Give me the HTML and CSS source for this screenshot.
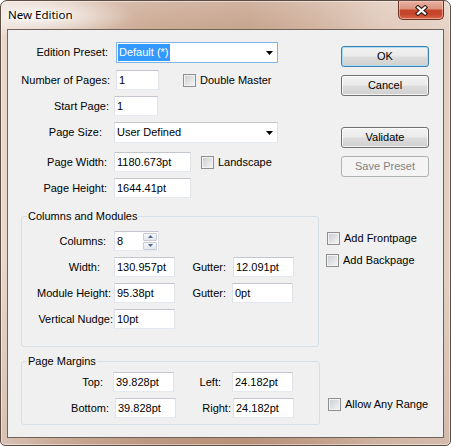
FILE: index.html
```html
<!DOCTYPE html>
<html>
<head>
<meta charset="utf-8">
<title>New Edition</title>
<link rel="stylesheet" href="styles.css">
</head>
<body>
<div class="window">
  <div class="titlebar">
    <span class="title">New Edition</span>
    <div class="close">
      <svg width="13" height="11" viewBox="0 0 13 11">
        <path d="M3 2.5 L10 8.5 M10 2.5 L3 8.5" stroke="#3b2019" stroke-width="4.4" stroke-linecap="square" fill="none"/>
        <path d="M3 2.5 L10 8.5 M10 2.5 L3 8.5" stroke="#ffffff" stroke-width="2.2" stroke-linecap="square" fill="none"/>
      </svg>
    </div>
  </div>

  <div class="client">
    <div class="left">
      <div class="form">
        <div class="row h21">
          <span class="lbl lw-100">Edition Preset:</span>
          <div class="combo focus w162 ml-8"><span class="sel">Default (*)</span><svg class="arrow" width="7" height="4" viewBox="0 0 7 4"><path d="M0 0H7L3.5 4Z" fill="#000"/></svg></div>
        </div>
        <div class="row mt-1">
          <span class="lbl lw-102">Number of Pages:</span>
          <div class="tb w43 ml-6">1</div>
          <div class="check ml-24"><span class="cb"></span><span>Double Master</span></div>
        </div>
        <div class="row">
          <span class="lbl lw-101">Start Page:</span>
          <div class="tb w44 ml-5">1</div>
        </div>
        <div class="row h21">
          <span class="lbl lw-94">Page Size:</span>
          <div class="combo w164 ml-12"><span class="val">User Defined</span><svg class="arrow" width="7" height="4" viewBox="0 0 7 4"><path d="M0 0H7L3.5 4Z" fill="#000"/></svg></div>
        </div>
        <div class="row mt-3">
          <span class="lbl lw-99">Page Width:</span>
          <div class="tb w77 ml-7">1180.673pt</div>
          <div class="check ml-10"><span class="cb"></span><span>Landscape</span></div>
        </div>
        <div class="row">
          <span class="lbl lw-99">Page Height:</span>
          <div class="tb w77 ml-7">1644.41pt</div>
        </div>
      </div>

      <div class="group cols">
        <span class="group-title">Columns and Modules</span>
        <div class="group-body pt-14">
          <div class="row">
            <span class="lbl lw-84">Columns:</span>
            <div class="tb spin ml-8">
              <span>8</span>
              <span class="spin-btns">
                <span class="spin-btn"><svg width="5" height="3" viewBox="0 0 5 3"><path d="M0 3H5L2.5 0Z" fill="#4a6797"/></svg></span>
                <span class="spin-btn"><svg width="5" height="3" viewBox="0 0 5 3"><path d="M0 0H5L2.5 3Z" fill="#4a6797"/></svg></span>
              </span>
            </div>
          </div>
          <div class="row">
            <span class="lbl lw-78">Width:</span>
            <div class="tb w61 ml-14">130.957pt</div>
            <span class="lbl lw-51">Gutter:</span>
            <div class="tb w61 ml-7">12.091pt</div>
          </div>
          <div class="row">
            <span class="lbl lw-89">Module Height:</span>
            <div class="tb w61 ml-3">95.38pt</div>
            <span class="lbl lw-51">Gutter:</span>
            <div class="tb w61 ml-6">0pt</div>
          </div>
          <div class="row">
            <span class="lbl lw-91">Vertical Nudge:</span>
            <div class="tb w61 ml-1">10pt</div>
          </div>
        </div>
      </div>

      <div class="group margins">
        <span class="group-title">Page Margins</span>
        <div class="group-body pt-10">
          <div class="row">
            <span class="lbl lw-81">Top:</span>
            <div class="tb w61 ml-10">39.828pt</div>
            <span class="lbl lw-47">Left:</span>
            <div class="tb w61 ml-11">24.182pt</div>
          </div>
          <div class="row">
            <span class="lbl lw-87">Bottom:</span>
            <div class="tb w61 ml-6">39.828pt</div>
            <span class="lbl lw-55">Right:</span>
            <div class="tb w61 ml-2">24.182pt</div>
          </div>
        </div>
      </div>
    </div>

    <div class="right">
      <div class="btn default first">OK</div>
      <div class="btn near">Cancel</div>
      <div class="btn far">Validate</div>
      <div class="btn near disabled">Save Preset</div>
      <div class="check front"><span class="cb"></span><span>Add Frontpage</span></div>
      <div class="check back"><span class="cb"></span><span>Add Backpage</span></div>
      <div class="check range"><span class="cb"></span><span>Allow Any Range</span></div>
    </div>
  </div>
</div>
</body>
</html>
```

FILE: styles.css
```css
* { box-sizing: border-box; }

html, body {
  margin: 0;
  padding: 0;
}

body {
  width: 451px;
  height: 446px;
  overflow: hidden;
  background: #ffffff;
  font-family: "Liberation Sans", Arial, sans-serif;
  font-size: 11px;
  color: #000;
}

/* ---------- window frame ---------- */
.window {
  width: 451px;
  height: 446px;
  display: flex;
  flex-direction: column;
  padding: 0 6px 7px 6px;
  border: 1px solid #5e4d43;
  border-radius: 7px 7px 5px 5px;
  box-shadow: inset 0 0 0 1px rgba(255, 255, 255, 0.45);
  background:
    radial-gradient(90px 22px at 42px 15px, rgba(255, 255, 255, 0.85), rgba(255, 255, 255, 0)),
    linear-gradient(to bottom, rgba(255, 255, 255, 0.22) 0, rgba(255, 255, 255, 0) 40px, rgba(0, 0, 0, 0) 260px, rgba(110, 60, 30, 0.14) 100%),
    linear-gradient(to right, #e9d8cd 0%, #d8bdab 12%, #c9a58e 33%, #c39e86 55%, #cfae99 70%, #dfc7b8 85%, #e4d0c3 100%);
}

.titlebar {
  height: 28px;
  display: flex;
  justify-content: space-between;
  align-items: flex-start;
  flex: none;
}

.title {
  margin: 6px 0 0 1px;
  font-family: "Noto Sans", "Liberation Sans", sans-serif;
  font-size: 11.5px;
  line-height: 16px;
  color: #000;
  text-shadow: 0 0 6px #fff, 0 0 3px #fff;
}

.close {
  width: 46px;
  height: 19px;
  display: flex;
  align-items: center;
  justify-content: center;
  border: 1px solid #6b3326;
  border-top: none;
  border-radius: 0 0 5px 5px;
  background: linear-gradient(to bottom, #e8b0a0 0%, #dc9480 42%, #c8472c 52%, #c44429 72%, #d8684c 100%);
  box-shadow: inset 0 0 0 1px rgba(255, 210, 195, 0.55);
}

.client {
  flex: 1;
  display: flex;
  background: #f0f0f0;
  border: 1px solid #6f6259;
}

/* ---------- left column ---------- */
.left {
  width: 318px;
  flex: none;
  display: flex;
  flex-direction: column;
}

.form {
  display: flex;
  flex-direction: column;
  gap: 6px;
  padding-top: 12px;
}

.row {
  display: flex;
  align-items: center;
  height: 20px;
}
.row.h21 { height: 21px; }
.mt-1 { margin-top: 1px; }
.mt-3 { margin-top: 3px; }

.lbl {
  flex: none;
  text-align: right;
  white-space: nowrap;
  line-height: 13px;
}
.lw-47 { width: 47px; }
.lw-51 { width: 51px; }
.lw-55 { width: 55px; }
.lw-78 { width: 78px; }
.lw-81 { width: 81px; }
.lw-84 { width: 84px; }
.lw-87 { width: 87px; }
.lw-89 { width: 89px; }
.lw-91 { width: 91px; }
.lw-94 { width: 94px; }
.lw-99 { width: 99px; }
.lw-100 { width: 100px; }
.lw-101 { width: 101px; }
.lw-102 { width: 102px; }

.ml-1 { margin-left: 1px; }
.ml-2 { margin-left: 2px; }
.ml-3 { margin-left: 3px; }
.ml-5 { margin-left: 5px; }
.ml-6 { margin-left: 6px; }
.ml-7 { margin-left: 7px; }
.ml-8 { margin-left: 8px; }
.ml-10 { margin-left: 10px; }
.ml-11 { margin-left: 11px; }
.ml-12 { margin-left: 12px; }
.ml-14 { margin-left: 14px; }
.ml-24 { margin-left: 24px; }

/* text boxes */
.tb {
  flex: none;
  height: 20px;
  display: flex;
  align-items: center;
  padding: 0 2px;
  background: #fff;
  border: 1px solid;
  border-color: #c3c6cc #dfe3e8 #e3e9ef #dfe3e8;
  line-height: 13px;
  white-space: nowrap;
}
.w43 { width: 43px; }
.w44 { width: 44px; }
.w61 { width: 61px; }
.w77 { width: 77px; }

/* combo boxes */
.combo {
  flex: none;
  height: 21px;
  display: flex;
  align-items: center;
  justify-content: space-between;
  padding: 0 4px 0 2px;
  background: #fff;
  border: 1px solid;
  border-color: #c3c6cc #dfe3e8 #e3e9ef #dfe3e8;
  line-height: 13px;
}
.combo.focus {
  border-color: #7eb4ea;
  padding-left: 1px;
}
.w162 { width: 162px; }
.w164 { width: 164px; }

.sel {
  height: 17px;
  display: flex;
  align-items: center;
  padding: 0 1px;
  background: #3399ff;
  color: #fff;
}
.arrow { flex: none; }

/* spin box */
.spin {
  width: 45px;
  justify-content: space-between;
  padding: 0 1px 0 2px;
}
.spin-btns {
  display: flex;
  flex-direction: column;
  gap: 1px;
}
.spin-btn {
  width: 14px;
  height: 8px;
  display: flex;
  align-items: center;
  justify-content: center;
  border: 1px solid #c8ccd3;
  border-radius: 1px;
  background: linear-gradient(to bottom, #f6f7f9, #e3e7ec);
}

/* checkbox */
.check {
  display: flex;
  align-items: center;
  gap: 4px;
  height: 13px;
  line-height: 13px;
  white-space: nowrap;
  flex: none;
}
.cb {
  width: 13px;
  height: 13px;
  flex: none;
  border: 1px solid #8e8f8f;
  background: linear-gradient(135deg, #c9ccd1 0%, #e4e5e7 60%, #f7f7f7 100%);
  box-shadow: inset 0 0 0 1px #f2f2f2;
}

/* group boxes */
.group {
  position: relative;
  margin-left: 13px;
  border: 1px solid #d5dfe5;
  border-radius: 3px;
}
.group.cols {
  margin-top: 18px;
  width: 298px;
  height: 131px;
}
.group.margins {
  margin-top: 14px;
  width: 299px;
  height: 64px;
}
.group-title {
  position: absolute;
  top: -7px;
  left: 5px;
  padding: 0 1px;
  line-height: 13px;
  background: #f0f0f0;
  white-space: nowrap;
}
.group-body {
  display: flex;
  flex-direction: column;
  gap: 6px;
}
.pt-14 { padding-top: 14px; }
.pt-10 { padding-top: 10px; }

/* ---------- right column ---------- */
.right {
  display: flex;
  flex-direction: column;
  align-items: flex-start;
}

.btn {
  width: 88px;
  height: 21px;
  margin-left: 15px;
  display: flex;
  align-items: center;
  justify-content: center;
  border: 1px solid #707070;
  border-radius: 3px;
  background: linear-gradient(to bottom, #f2f2f2 0%, #ebebeb 48%, #dddddd 52%, #cfcfcf 100%);
  box-shadow: inset 0 0 0 1px rgba(255, 255, 255, 0.75);
  line-height: 13px;
}
.btn.first { margin-top: 16px; }
.btn.near { margin-top: 8px; }
.btn.far { margin-top: 31px; }
.btn.default {
  border-color: #3c7fb1;
  box-shadow: inset 0 0 0 1px #a9dcf6;
  background: linear-gradient(to bottom, #eaf6fd 0%, #d9f0fc 48%, #bee6fd 52%, #a7d9f5 100%);
  background: linear-gradient(to bottom, #f2f2f2 0%, #ebebeb 48%, #dddddd 52%, #cfcfcf 100%);
}
.btn.disabled {
  border-color: #adb2b5;
  background: #f4f4f4;
  box-shadow: none;
  color: #838383;
}

.check.front { margin: 55px 0 0 1px; }
.check.back { margin-top: 9px; }
.check.range { margin: 131px 0 0 2px; }
```
